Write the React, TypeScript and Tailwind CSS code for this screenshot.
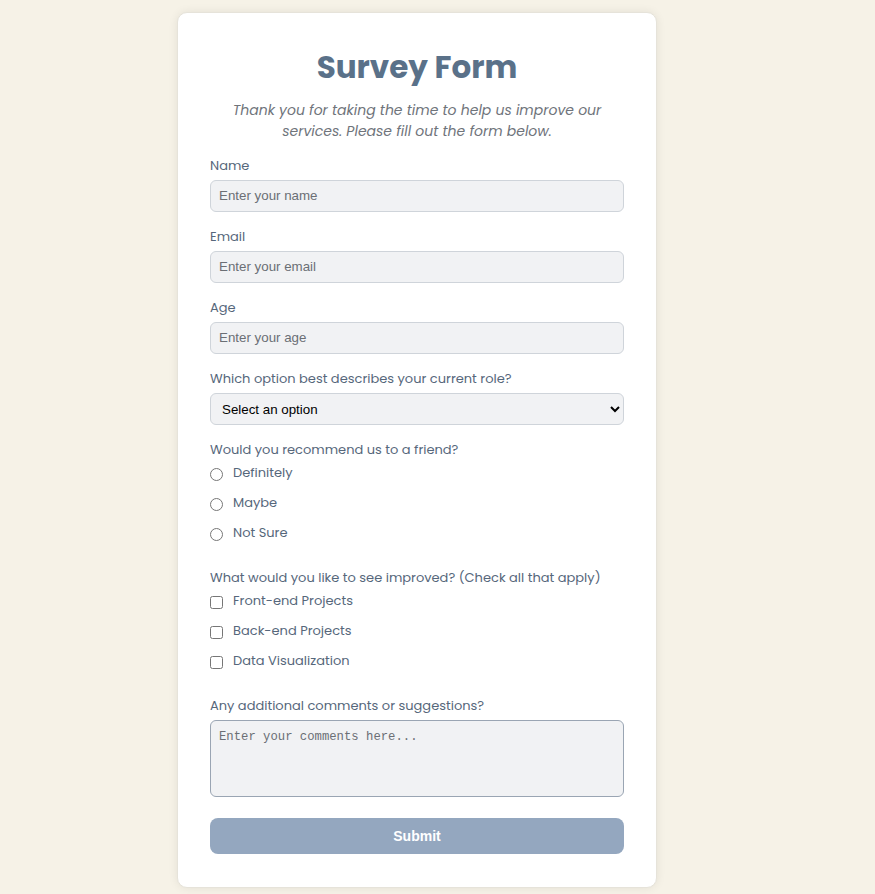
const font = "font-['Poppins','Open_Sans','Noto_Sans',sans-serif]"

const TextField = ({ label, placeholder, type = "text" }: { label: string; placeholder: string; type?: string }) => {
  return (
    <div className="mb-[15px]">
      <label className="block text-[13px] leading-[20px] text-[#56677b] mb-[4px]">{label}</label>
      <input
        type={type}
        placeholder={placeholder}
        className="block w-full h-[32px] px-[8px] pb-[1px] rounded-[6px] border border-[#cfd4da] bg-[#f1f2f4] text-[13.33px] font-['Liberation_Sans',Arial,sans-serif] placeholder:text-[#6b6f75] outline-none"
      />
    </div>
  )
}

const Option = ({ type, label, name }: { type: "radio" | "checkbox"; label: string; name: string }) => {
  return (
    <label className="flex items-start h-[30px] text-[13px] text-[#56677b]">
      <input type={type} name={name} className="mt-[6px] mr-[10px] w-[13px] h-[13px] accent-[#5a7189]" />
      <span className="leading-[20px] mt-[1px]">{label}</span>
    </label>
  )
}

const App = () => {
  return (
    <div className={`min-h-screen bg-[#f6f2e7] pt-[12px] pb-[8px] ${font}`}>
      <div className="ml-[177px] w-[480px] rounded-[10px] border border-[#e6e3da] bg-white px-[32px] pt-[33px] pb-[33px] shadow-[0_0_10px_rgba(0,0,0,0.08)]">
        <h1 className="text-center text-[31px] leading-[42px] font-bold text-[#5a7189]">Survey Form</h1>
        <p className="mt-[12px] mb-[14px] px-[10px] text-center text-[14px] leading-[21px] italic text-[#6f747b]">
          Thank you for taking the time to help us improve our services. Please fill out the form below.
        </p>

        <form>
          <TextField label="Name" placeholder="Enter your name" />
          <TextField label="Email" placeholder="Enter your email" type="email" />
          <TextField label="Age" placeholder="Enter your age" type="number" />

          <div className="mb-[15px]">
            <label className="block text-[13px] leading-[20px] text-[#56677b] mb-[4px]">
              Which option best describes your current role?
            </label>
            <select className="block w-full h-[32px] px-[7px] rounded-[6px] border border-[#cfd4da] bg-[#f1f2f4] text-[13.33px] text-black font-['Liberation_Sans',Arial,sans-serif] outline-none">
              <option>Select an option</option>
              <option>Student</option>
              <option>Full Time Job</option>
              <option>Full Time Learner</option>
              <option>Prefer not to say</option>
              <option>Other</option>
            </select>
          </div>

          <div className="mb-[16px]">
            <p className="text-[13px] leading-[20px] text-[#56677b] mb-[2px]">Would you recommend us to a friend?</p>
            <Option type="radio" name="rec" label="Definitely" />
            <Option type="radio" name="rec" label="Maybe" />
            <Option type="radio" name="rec" label="Not Sure" />
          </div>

          <div className="mb-[16px]">
            <p className="text-[13px] leading-[20px] text-[#56677b] mb-[2px]">
              What would you like to see improved? (Check all that apply)
            </p>
            <Option type="checkbox" name="imp" label="Front-end Projects" />
            <Option type="checkbox" name="imp" label="Back-end Projects" />
            <Option type="checkbox" name="imp" label="Data Visualization" />
          </div>

          <div className="mb-[21px]">
            <label className="block text-[13px] leading-[20px] text-[#56677b] mb-[4px]">
              Any additional comments or suggestions?
            </label>
            <textarea
              placeholder="Enter your comments here..."
              className="block w-full h-[77px] px-[8px] py-[7px] resize-none rounded-[6px] border border-[#9aa5b3] bg-[#f1f2f4] text-[12.25px] font-['Liberation_Mono',monospace] placeholder:text-[#6b6f75] outline-none"
            />
          </div>

          <button
            type="submit"
            className="block w-full h-[36px] rounded-[8px] bg-[#94a7bf] text-white text-[14px] font-bold font-['Liberation_Sans',Arial,sans-serif]"
          >
            Submit
          </button>
        </form>
      </div>
    </div>
  )
}

export default App
